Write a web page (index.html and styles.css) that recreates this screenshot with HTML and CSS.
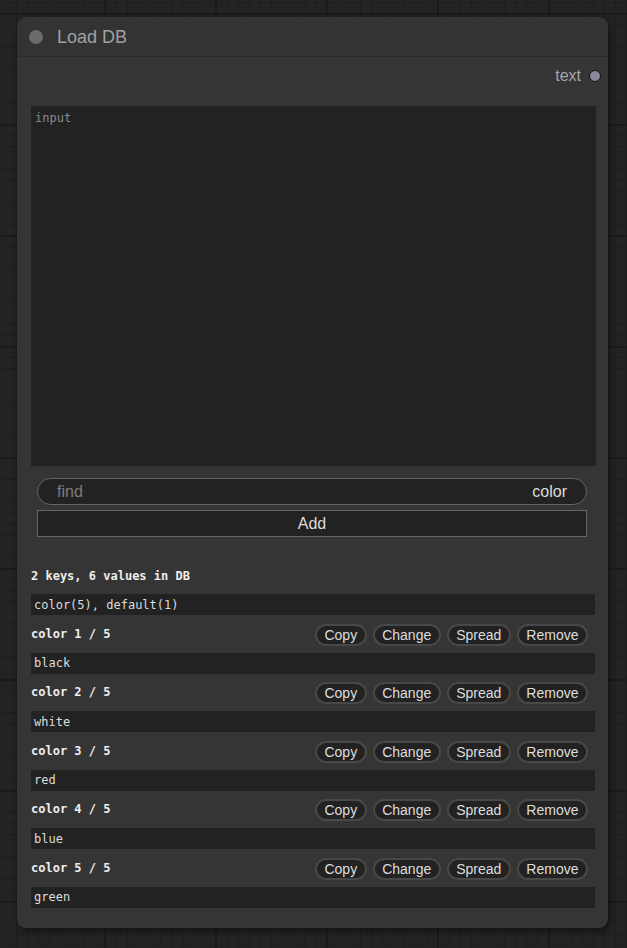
FILE: index.html
```html
<!DOCTYPE html>
<html>
<head>
<meta charset="utf-8">
<link rel="stylesheet" href="styles.css">
</head>
<body>
<div class="canvas">
  <div class="node">
    <div class="title">
      <span class="title-dot"></span>
      <span class="title-text">Load DB</span>
    </div>
    <div class="body">
      <div class="outputs">
        <span class="out-label">text</span>
        <span class="out-dot"></span>
      </div>
      <div class="textarea"><span class="placeholder">input</span></div>
      <div class="find">
        <span class="find-label">find</span>
        <span class="find-value">color</span>
      </div>
      <div class="add">Add</div>
      <div class="info">2 keys, 6 values in DB</div>
      <div class="bar">color(5), default(1)</div>

      <div class="item-head">
        <span class="item-name">color 1 / 5</span>
        <div class="btns"><span class="btn">Copy</span><span class="btn">Change</span><span class="btn">Spread</span><span class="btn">Remove</span></div>
      </div>
      <div class="bar">black</div>

      <div class="item-head">
        <span class="item-name">color 2 / 5</span>
        <div class="btns"><span class="btn">Copy</span><span class="btn">Change</span><span class="btn">Spread</span><span class="btn">Remove</span></div>
      </div>
      <div class="bar">white</div>

      <div class="item-head">
        <span class="item-name">color 3 / 5</span>
        <div class="btns"><span class="btn">Copy</span><span class="btn">Change</span><span class="btn">Spread</span><span class="btn">Remove</span></div>
      </div>
      <div class="bar">red</div>

      <div class="item-head">
        <span class="item-name">color 4 / 5</span>
        <div class="btns"><span class="btn">Copy</span><span class="btn">Change</span><span class="btn">Spread</span><span class="btn">Remove</span></div>
      </div>
      <div class="bar">blue</div>

      <div class="item-head">
        <span class="item-name">color 5 / 5</span>
        <div class="btns"><span class="btn">Copy</span><span class="btn">Change</span><span class="btn">Spread</span><span class="btn">Remove</span></div>
      </div>
      <div class="bar">green</div>
    </div>
  </div>
</div>
</body>
</html>
```
FILE: styles.css
```css
html, body {
  margin: 0;
  padding: 0;
}
body {
  width: 627px;
  height: 948px;
  overflow: hidden;
  background-color: #232323;
  background-image:
    linear-gradient(to right, #1a1a1a 0 2px, transparent 2px),
    linear-gradient(to bottom, #1a1a1a 0 2px, transparent 2px),
    linear-gradient(to right, #1d1d1d 0 1px, transparent 1px),
    linear-gradient(to bottom, #1d1d1d 0 1px, transparent 1px);
  background-size: 111px 111px, 111px 111px, 11.1px 11.1px, 11.1px 11.1px;
  background-position: 104px 13px, 104px 13px, 5px 2px, 5px 2px;
  font-family: "Liberation Sans", Arial, sans-serif;
}
.canvas {
  padding: 17px 0 0 17px;
}
.node {
  width: 591px;
  height: 911px;
  background: #353535;
  border-radius: 9px;
  box-shadow: 2px 3px 6px rgba(0, 0, 0, 0.45);
  display: flex;
  flex-direction: column;
  box-sizing: border-box;
}
.title {
  height: 40px;
  display: flex;
  align-items: center;
  border-bottom: 1px solid #2b2b2b;
  background: #333;
  border-radius: 9px 9px 0 0;
  box-sizing: border-box;
  flex-shrink: 0;
}
.title-dot {
  width: 14px;
  height: 14px;
  border-radius: 50%;
  background: #6a6a6a;
  margin-left: 12px;
  margin-top: 1px;
}
.title-text {
  margin-left: 14px;
  font-size: 18px;
  color: #a0a0a0;
  margin-top: 1px;
}
.body {
  padding: 0 12px 20px 14px;
  display: flex;
  flex-direction: column;
}
.outputs {
  display: flex;
  justify-content: flex-end;
  align-items: center;
  height: 20px;
  margin-top: 9px;
  margin-bottom: 20px;
  margin-right: -5px;
}
.out-label {
  font-size: 16px;
  color: #a6a6a6;
  margin-right: 8px;
}
.out-dot {
  width: 10px;
  height: 10px;
  border-radius: 50%;
  background: #8a8a9a;
  border: 1px solid #151515;
  box-sizing: content-box;
  margin-top: -1px;
}
.textarea {
  height: 360px;
  background: #222;
  padding: 2px 4px;
  box-sizing: border-box;
}
.placeholder {
  font-family: "DejaVu Sans Mono", "Liberation Mono", monospace;
  font-size: 12px;
  color: #8a8a8a;
}
.find {
  margin: 12px 9px 0 6px;
  height: 27px;
  border: 1px solid #666;
  border-radius: 14px;
  background: #222;
  display: flex;
  align-items: center;
  justify-content: space-between;
  padding: 0 19px 0 19px;
  box-sizing: border-box;
  font-size: 16px;
}
.find-label {
  color: #7c7c7c;
}
.find-value {
  color: #dcdcdc;
}
.add {
  margin: 5px 9px 0 6px;
  height: 27px;
  border: 1px solid #666;
  background: #222;
  display: flex;
  align-items: center;
  justify-content: center;
  color: #dcdcdc;
  font-size: 16px;
  box-sizing: border-box;
}
.info {
  margin-top: 30px;
  margin-bottom: 9px;
  line-height: 18px;
  font-family: "DejaVu Sans Mono", "Liberation Mono", monospace;
  font-weight: bold;
  font-size: 12px;
  color: #eeeeee;
}
.bar {
  height: 21px;
  background: #222;
  margin-right: 1px;
  padding-left: 3px;
  display: flex;
  align-items: center;
  font-family: "DejaVu Sans Mono", "Liberation Mono", monospace;
  font-size: 12px;
  color: #dddddd;
}
.item-head {
  height: 37.5px;
  display: flex;
  align-items: center;
  justify-content: space-between;
}
.item-name {
  font-family: "DejaVu Sans Mono", "Liberation Mono", monospace;
  font-weight: bold;
  font-size: 12px;
  color: #eeeeee;
}
.btns {
  display: flex;
  gap: 6px;
  margin-right: 8px;
  margin-top: 2px;
}
.btn {
  height: 22px;
  border: 2px solid #484848;
  border-radius: 11px;
  background: #222;
  color: #dddddd;
  font-size: 14px;
  padding: 0 7.5px;
  display: flex;
  align-items: center;
  box-sizing: border-box;
}
```
